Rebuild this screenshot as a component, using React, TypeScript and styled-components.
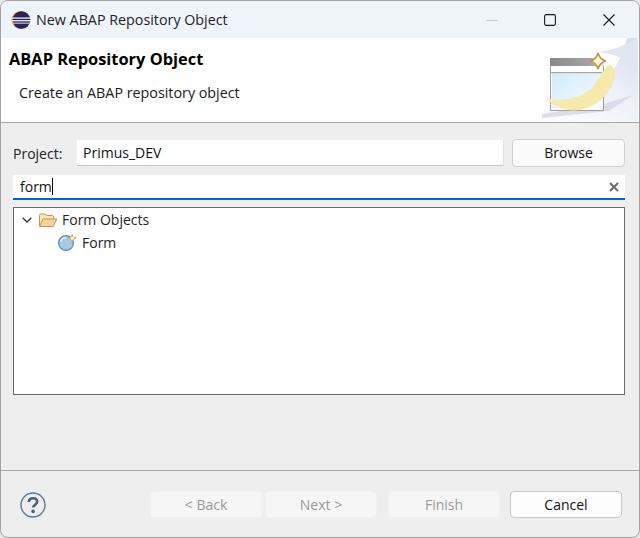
import React from "react";
import styled, { createGlobalStyle } from "styled-components";

const GlobalStyle = createGlobalStyle`
  html, body {
    margin: 0;
    padding: 0;
    background: #e8e8e8;
  }
  body {
    font-family: "Open Sans", "Noto Sans", "Liberation Sans", sans-serif;
    font-size: 14px;
    color: #111;
  }
`;

function EclipseLogo() {
  return (
    <svg width="20" height="20" viewBox="0 0 20 20">
      <circle cx="9.5" cy="10" r="9" fill="#e8993a" />
      <circle cx="10.5" cy="10" r="8.8" fill="#2c2255" />
      <rect x="1" y="7.4" width="19" height="1.4" fill="#e4e2ee" />
      <rect x="0.8" y="10" width="19" height="1.4" fill="#e4e2ee" />
      <rect x="1.6" y="12.6" width="17" height="1.1" fill="#cfcce0" />
    </svg>
  );
}

function BannerArt() {
  return (
    <svg width="100" height="83" viewBox="0 0 100 83">
      <defs>
        <linearGradient id="wash" x1="0" y1="1" x2="1" y2="0">
          <stop offset="0" stopColor="#ffffff" />
          <stop offset="0.55" stopColor="#eef1f8" />
          <stop offset="1" stopColor="#d5dcef" />
        </linearGradient>
        <linearGradient id="pane" x1="0" y1="0" x2="1" y2="1">
          <stop offset="0" stopColor="#d0ebfd" />
          <stop offset="1" stopColor="#f8fcff" />
        </linearGradient>
        <linearGradient id="bar" x1="0" y1="0" x2="1" y2="0">
          <stop offset="0" stopColor="#8a8a8a" />
          <stop offset="0.75" stopColor="#a4a4a4" />
          <stop offset="1" stopColor="#e6e6e6" />
        </linearGradient>
      </defs>
      <path d="M3 83V72C48 72 78 40 88 0H99V83Z" fill="url(#wash)" />
      <path d="M60 14C76 12 88 6 99 0V30C90 22 76 16 60 14Z" fill="#e1e6f3" />
      <path d="M3 76L65 66L94 57L70 73L3 80Z" fill="#d6d5e6" opacity="0.8" />
      <rect x="11.5" y="20.5" width="53" height="52" fill="#fff" stroke="#a0a0a0" />
      <rect x="11" y="20" width="54" height="8" fill="url(#bar)" />
      <rect x="13" y="35" width="50" height="36" fill="url(#pane)" />
      <rect x="12" y="34" width="51" height="1.2" fill="#a8a8a8" />
      <path
        d="M7 60C18 63 26 62 34 60C46 57 54 50 58 43C62 37 66 31 69 27C74 27 77 31 76 38C74 52 60 68 41 72C28 74 15 69 7 60Z"
        fill="#f6e9ab"
      />
      <path
        d="M59 15C60 19 63 22 67 23C63 24 60 27 59 31C58 27 55 24 51 23C55 22 58 19 59 15Z"
        fill="#fff8df"
        stroke="#bd9740"
        strokeWidth="1.6"
      />
    </svg>
  );
}

function FolderIcon() {
  return (
    <svg width="20" height="16" viewBox="0 0 20 16">
      <path
        d="M1.5 13.5V3.5C1.5 2.5 2 2 3 2H7L8.5 3.5H14C15 3.5 15.5 4 15.5 5V6.5"
        fill="#fae6bb"
        stroke="#c4934f"
      />
      <path
        d="M1.5 14.5L5 7H18.8L15.2 14.5Z"
        fill="#f8d596"
        stroke="#c4934f"
        strokeLinejoin="round"
      />
    </svg>
  );
}

function FormIcon() {
  return (
    <svg width="19" height="17" viewBox="0 0 19 17">
      <circle cx="8" cy="9" r="7.3" fill="#a6c9e4" stroke="#5a92bf" strokeWidth="1.4" />
      <path d="M2.6 8C3.4 5 5.6 3.5 8 3.5" fill="none" stroke="#e2f0f9" strokeWidth="1.4" />
      <path
        d="M14.2 0.4C14.6 2.6 15.6 3.6 18.2 4.2C15.6 4.8 14.6 5.8 14.2 8C13.8 5.8 12.8 4.8 10.2 4.2C12.8 3.6 13.8 2.6 14.2 0.4Z"
        fill="#fff6d6"
        stroke="#c9a24a"
      />
    </svg>
  );
}

function HelpIcon() {
  return (
    <svg width="26" height="26" viewBox="0 0 26 26">
      <circle cx="13" cy="13" r="12" fill="none" stroke="#5f7594" strokeWidth="1.4" />
      <path
        d="M8.8 10C9 7.5 10.8 6.3 13 6.3C15.4 6.3 17.2 7.6 17.2 9.8C17.2 12.6 13.2 12.6 13.2 15.6"
        fill="none"
        stroke="#4a5f80"
        strokeWidth="2.6"
      />
      <circle cx="13.1" cy="19.4" r="1.8" fill="#4a5f80" />
    </svg>
  );
}

export default function App() {
  return (
    <>
      <GlobalStyle />
      <Dialog>
        <TitleBar>
          <TitleGroup>
            <EclipseLogo />
            <TitleText>New ABAP Repository Object</TitleText>
          </TitleGroup>
          <WindowControls>
            <WindowButton>
              <svg width="12" height="12" viewBox="0 0 12 12">
                <path d="M0 6.5H12" stroke="#c4c8cf" strokeWidth="1" />
              </svg>
            </WindowButton>
            <WindowButton>
              <svg width="12" height="12" viewBox="0 0 12 12">
                <rect x="0.6" y="0.6" width="10.8" height="10.8" rx="1.6" fill="none" stroke="#1a1a1a" strokeWidth="1.1" />
              </svg>
            </WindowButton>
            <WindowButton>
              <svg width="12" height="12" viewBox="0 0 12 12">
                <path d="M0.5 0.5L11.5 11.5M11.5 0.5L0.5 11.5" stroke="#1a1a1a" strokeWidth="1.1" />
              </svg>
            </WindowButton>
          </WindowControls>
        </TitleBar>

        <Banner>
          <BannerText>
            <BannerTitle>ABAP Repository Object</BannerTitle>
            <BannerSubtitle>Create an ABAP repository object</BannerSubtitle>
          </BannerText>
          <BannerArt />
        </Banner>

        <Body>
          <ProjectRow>
            <FieldLabel>Project:</FieldLabel>
            <ProjectField>Primus_DEV</ProjectField>
            <BrowseButton>Browse</BrowseButton>
          </ProjectRow>

          <SearchField>
            <SearchText>form</SearchText>
            <Caret />
            <ClearIcon width="10" height="10" viewBox="0 0 10 10">
              <path d="M1 1L9 9M9 1L1 9" stroke="#6c6c6c" strokeWidth="2" />
            </ClearIcon>
          </SearchField>

          <Tree>
            <TreeRow>
              <Chevron width="10" height="6" viewBox="0 0 10 6">
                <path d="M0.7 0.7L5 5L9.3 0.7" fill="none" stroke="#333" strokeWidth="1.3" />
              </Chevron>
              <FolderIcon />
              <TreeLabel>Form Objects</TreeLabel>
            </TreeRow>
            <TreeChild>
              <FormIcon />
              <TreeLabel>Form</TreeLabel>
            </TreeChild>
          </Tree>
        </Body>

        <Footer>
          <HelpIcon />
          <FooterButtons>
            <NavGroup>
              <DialogButton disabled>&lt; Back</DialogButton>
              <DialogButton disabled>Next &gt;</DialogButton>
            </NavGroup>
            <DialogButton disabled>Finish</DialogButton>
            <DialogButton>Cancel</DialogButton>
          </FooterButtons>
        </Footer>
      </Dialog>
    </>
  );
}

const Dialog = styled.div`
  width: 640px;
  height: 538px;
  box-sizing: border-box;
  border: 1px solid #a3a3a3;
  border-radius: 8px;
  background: #eeeeee;
  display: flex;
  flex-direction: column;
  overflow: hidden;
`;

const TitleBar = styled.div`
  height: 37px;
  flex: none;
  background: #eff4fa;
  display: flex;
  align-items: center;
  justify-content: space-between;
  padding-left: 10px;
`;

const TitleGroup = styled.div`
  display: flex;
  align-items: center;
  gap: 5px;
`;

const TitleText = styled.span`
  font-size: 14.3px;
  color: #222;
`;

const WindowControls = styled.div`
  display: flex;
  padding-right: 1px;
`;

const WindowButton = styled.div`
  width: 58px;
  height: 37px;
  display: flex;
  align-items: center;
  justify-content: center;

  &:last-child {
    width: 59px;
  }
`;

const Banner = styled.div`
  height: 84px;
  flex: none;
  background: #fff;
  border-bottom: 1px solid #a6a6a6;
  display: flex;
  justify-content: space-between;
`;

const BannerText = styled.div`
  padding: 10px 0 0 8px;
`;

const BannerTitle = styled.div`
  font-size: 16.4px;
  font-weight: 700;
  line-height: 22px;
  color: #000;
`;

const BannerSubtitle = styled.div`
  font-size: 14.3px;
  line-height: 20px;
  margin: 13px 0 0 10px;
  color: #1a1a1a;
`;

const Body = styled.div`
  flex: 1;
  padding: 17px 14px 0 12px;
  display: flex;
  flex-direction: column;
`;

const ProjectRow = styled.div`
  display: flex;
  align-items: center;
  height: 26px;
`;

const FieldLabel = styled.span`
  width: 64px;
  flex: none;
  color: #222;
`;

const ProjectField = styled.div`
  flex: 1;
  height: 25px;
  line-height: 25px;
  padding-left: 6px;
  background: #fff;
  border-bottom: 1px solid #c4c4c4;
  border-right: 1px solid #e2e2e2;
`;

const BrowseButton = styled.div`
  width: 111px;
  height: 26px;
  line-height: 26px;
  margin-left: 8px;
  text-align: center;
  background: #fbfbfb;
  border: 1px solid #d0d0d0;
  border-radius: 4px;
`;

const SearchField = styled.div`
  margin-top: 9px;
  height: 25px;
  box-sizing: border-box;
  background: #fff;
  border-bottom: 2px solid #0067c0;
  display: flex;
  align-items: center;
  padding: 0 6px 0 7px;
`;

const SearchText = styled.span`
  line-height: 22px;
`;

const Caret = styled.span`
  width: 1px;
  height: 17px;
  background: #000;
`;

const ClearIcon = styled.svg`
  margin-left: auto;
`;

const Tree = styled.div`
  margin-top: 7px;
  height: 188px;
  box-sizing: border-box;
  background: #fff;
  border: 1px solid #6a6a6a;
`;

const TreeRow = styled.div`
  display: flex;
  align-items: center;
  height: 23px;
  padding-left: 8px;
`;

const Chevron = styled.svg`
  margin-right: 6px;
`;

const TreeChild = styled(TreeRow)`
  padding-left: 44px;
  gap: 5px;
`;

const TreeLabel = styled.span`
  margin-left: 4px;
  color: #222;

  ${TreeChild} & {
    margin-left: 0;
  }
`;

const Footer = styled.div`
  height: 67px;
  flex: none;
  border-top: 1px solid #a6a6a6;
  display: flex;
  align-items: center;
  justify-content: space-between;
  padding: 1px 17px 0 19px;
  box-sizing: border-box;
`;

const FooterButtons = styled.div`
  display: flex;
  gap: 10px;
`;

const NavGroup = styled.div`
  display: flex;
  gap: 3px;
  margin-right: 1px;
`;

const DialogButton = styled.div<{ disabled?: boolean }>`
  width: 112px;
  height: 27px;
  box-sizing: border-box;
  line-height: 26px;
  text-align: center;
  border-radius: 4px;
  background: ${(p) => (p.disabled ? "#f6f6f6" : "#fdfdfd")};
  border: 1px solid ${(p) => (p.disabled ? "#f1f1f1" : "#c8c8c8")};
  color: ${(p) => (p.disabled ? "#9a9a9a" : "#111")};
`;
